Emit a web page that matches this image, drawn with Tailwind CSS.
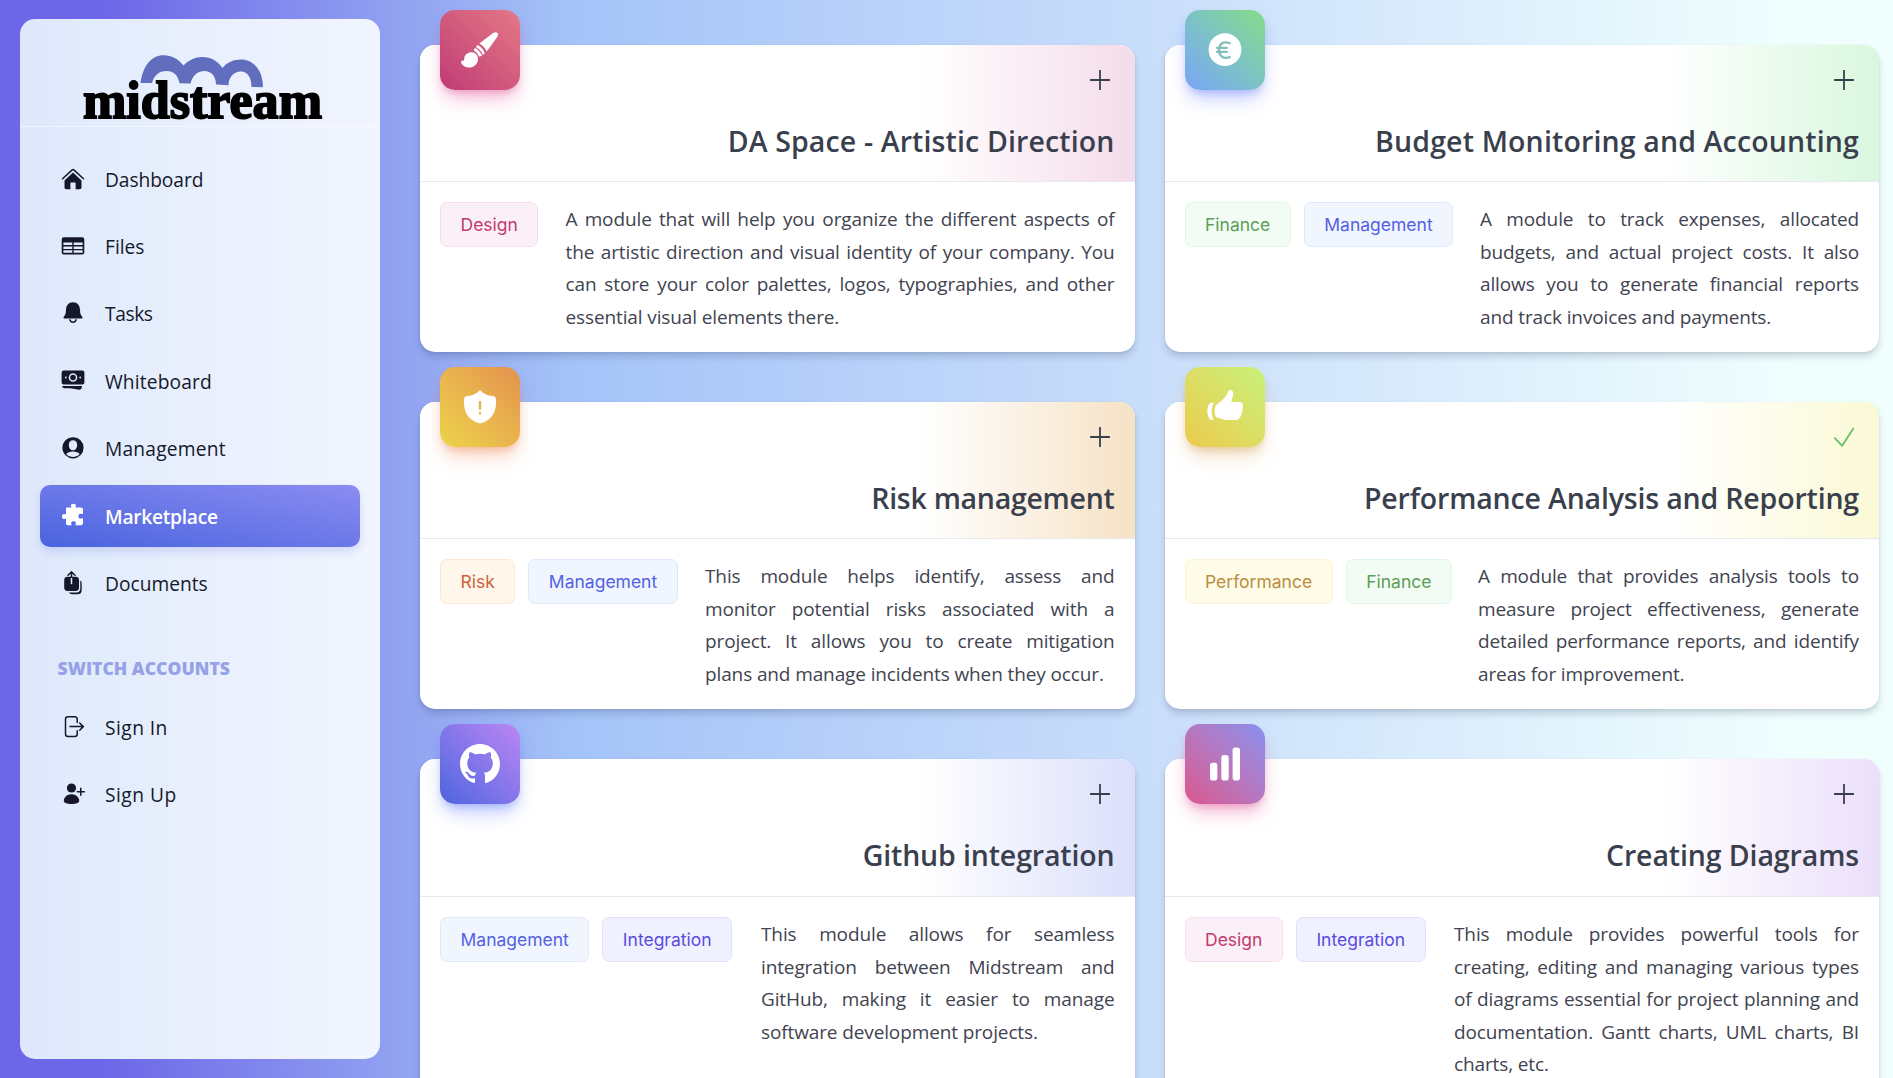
<!DOCTYPE html>
<html lang="en">
<head>
<meta charset="utf-8">
<title>Midstream - Marketplace</title>
<script src="https://cdn.jsdelivr.net/npm/@tailwindcss/browser@4"></script>
</head>
<body class="h-[1078px] overflow-hidden bg-[linear-gradient(90deg,#6c66e8_0px,#6c66e8_100px,#91a2f1_400px,#a4c3f8_570px,#c9defb_1150px,#f0fffe_1800px)] font-['Open_Sans',sans-serif]">
<div class="flex h-[1078px] overflow-hidden">

  <aside class="ml-5 mt-[19px] h-[1040px] w-[360px] shrink-0 rounded-[15px] bg-[linear-gradient(90deg,#dfe7fc_0%,#e1ecfc_20%,#e9effd_50%,#f1f5ff_100%)]">
    <div class="h-[108px] border-b border-white/50">
      <svg class="h-[107px] w-[360px] overflow-visible" viewBox="0 0 360 107">
        <path fill="#616dbd" d="M120.5 64C123 46 132 36.3 143.5 36.3C152 36.3 158 40 163.5 46.5C169 41 175 38 182.5 38C191 38 197 41.500 202.500 49C207 43.500 213 40.500 221 40.500C234 40.500 243 52 243 68.300L231.500 68C231.500 59 228 52.500 221 52.500C213 52.500 208.500 59 208.500 66.300L196 65.500C196 57 191 52 184.500 52C177 52 172.500 57 170.500 64.500L159.500 64.300C158 56 153.500 52 146.500 52C139 52 134 56.500 132 64Z"/>
        <text x="63" y="98.600" textLength="239" lengthAdjust="spacingAndGlyphs" font-family="Liberation Serif, serif" font-weight="700" font-size="53.500" fill="#000" stroke="#000" stroke-width="1.900">midstream</text>
      </svg>
    </div>
    <nav class="flex flex-col gap-[5.4px] px-5 pt-[21px] text-[19.2px] font-medium text-[#15182a]" id="nav"></nav>
    <h2 class="mt-[42px] pl-[37.5px] text-[17.5px]/6 font-extrabold tracking-[0.050px] text-[#96a1e8]">SWITCH ACCOUNTS</h2>
    <nav class="mt-[16px] flex flex-col gap-[5.4px] px-5 text-[19.2px] font-medium text-[#15182a]" id="accounts"></nav>
  </aside>

  <main class="ml-10 mt-[45px] grid h-max w-[1459px] shrink-0 grid-cols-2 gap-x-[30px] gap-y-[50px]" id="cards"></main>
</div>

<script>
const items = [
  ['Dashboard', '<path d="M1.500 11.800 11.200 2.900Q12 2.200 12.800 2.900L22.500 11.800" fill="none" stroke="currentColor" stroke-width="1.500" stroke-linecap="round"/><path d="M12 5.600 20.500 13.400V20.500Q20.500 22.200 18.800 22.200H14.600V16.300Q14.600 15.600 13.900 15.600H10.100Q9.400 15.600 9.400 16.300V22.200H5.200Q3.500 22.200 3.500 20.500V13.400Z"/>', '-tracking-[0.080px]'],
  ['Files', '<path fill-rule="evenodd" d="M2.800 3.300H21.200Q23.300 3.300 23.300 5.400V18.400Q23.300 20.500 21.200 20.500H2.800Q.7 20.500 .7 18.400V5.400Q.7 3.300 2.800 3.300ZM2.400 8.600V11H11.300V8.600ZM12.700 8.600V11H21.600V8.600ZM2.400 12.400V14.900H11.300V12.400ZM12.700 12.400V14.900H21.600V12.400ZM2.400 16.300V18.800H11.300V16.300ZM12.700 16.300V18.800H21.600V16.300Z"/>', ''],
  ['Tasks', '<path d="M12 1.300C16.500 1.300 18.800 4.600 19 8.800C19.100 12.600 19.600 14 21 15.400C22 16.500 21.600 17.400 20.400 17.400H3.600C2.400 17.400 2 16.500 3 15.400C4.400 14 4.900 12.600 5 8.800C5.200 4.600 7.500 1.300 12 1.300Z"/><path d="M8.900 18.200Q9.200 21.300 12 21.300Q14.800 21.300 15.100 18.200" fill="none" stroke="currentColor" stroke-width="1.500"/>', '-tracking-[0.400px]'],
  ['Whiteboard', '<path fill-rule="evenodd" d="M2.600 1.500H21.400Q23.400 1.500 23.400 3.500V13.500Q23.400 15.500 21.400 15.500H2.600Q.6 15.500 .6 13.500V3.500Q.6 1.500 2.600 1.500ZM12 4.200A4.300 4.300 0 1 0 12 12.800A4.300 4.300 0 1 0 12 4.200ZM12 5.700A2.800 2.800 0 1 1 12 11.300A2.800 2.800 0 1 1 12 5.700ZM4.800 7.600A.9.9 0 1 0 4.800 9.400A.9.9 0 1 0 4.800 7.600ZM19.200 7.600A.9.9 0 1 0 19.200 9.400A.9.9 0 1 0 19.200 7.600Z"/><path d="M1.200 17H21Q21 20.800 18.300 20.700L9 19.200H3Q1.200 19.100 1.200 17Z"/>', 'tracking-[0.150px]'],
  ['Management', '<path fill-rule="evenodd" d="M12 1.200A10.600 10.600 0 1 0 12 22.400A10.600 10.600 0 1 0 12 1.200ZM12 4.200C14.600 4.200 16.200 6.200 16.200 8.900C16.200 11.800 14.300 14.200 12 14.200C9.700 14.200 7.800 11.800 7.800 8.900C7.800 6.200 9.400 4.200 12 4.200ZM12 15.600C15.200 15.600 17.700 16.700 18.700 18.200C15 21.800 9 21.800 5.300 18.200C6.300 16.700 8.800 15.600 12 15.600Z"/>', 'tracking-[0.220px]'],
  ['Marketplace', '<path d="M5 5.600Q5 4.600 6 4.600H9.900C10.600 4.600 10.400 4 10 3.300C9.300 2 10.600.7 12.400.7C14.200.7 15.500 2 14.800 3.300C14.400 4 14.200 4.600 14.900 4.600H19.900Q22 4.600 22 6.600V10.300C22 11.400 21.400 11.200 20.300 10.800C18.600 10.200 17.400 11.400 17.400 13.200C17.400 15 18.600 16.200 20.300 15.600C21.400 15.200 22 15.200 22 16V20Q22 22.300 19.800 22.300H15.100C14.300 22.300 14.400 21.700 14.700 20.800C15.300 19.200 14 18.300 12.500 18.300C11 18.300 9.700 19.200 10.300 20.800C10.600 21.700 10.700 22.300 9.900 22.300H6.700Q5 22.300 5 20.600V16.200C5 15.400 4.400 15.500 3.700 15.900C2.200 16.600 1 15.300 1 13.500C1 11.700 2.200 10.400 3.700 11.100C4.400 11.500 5 11.600 5 10.800Z"/>', ''],
  ['Documents', '<path d="M6.400 5.700H14.600Q18 5.700 18 9.100V16.500Q18 19.900 14.600 19.900H6.400Q3.200 19.900 3.200 16.500V9.100Q3.200 5.700 6.400 5.700Z"/><path d="M10.500 13.200V7" fill="none" stroke="#e5edfc" stroke-width="1.500"/><path d="M10.500 6.300V1.200M7 4.300 10.500 .9 14 4.300" fill="none" stroke="currentColor" stroke-width="1.500" stroke-linecap="round"/><path d="M19.300 9.400C20.500 10 20.700 11 20.700 12.400V18.400Q20.700 23.300 16.500 23.300H11Q8.600 23.300 7.900 21.600H15.400Q19.300 21.400 19.300 17.300Z"/>', ''],
];
const accountItems = [
  ['Sign In', '<path d="M16.200 7.500V4.300Q16.200 1.800 13.700 1.800H7Q4.500 1.800 4.500 4.300V19Q4.500 21.500 7 21.500H13.700Q16.200 21.500 16.200 19V15.700M9 11.600H22M18.700 8 22.300 11.600 18.700 15.200" fill="none" stroke="currentColor" stroke-width="1.500" stroke-linecap="round" stroke-linejoin="round"/>', 'tracking-[0.450px]'],
  ['Sign Up', '<circle cx="10.500" cy="6" r="4.600"/><path d="M10.500 12.200C15.500 12.200 18.200 15.700 18.200 18.700C18.200 20.800 15 22 10.500 22C6 22 2.800 20.800 2.800 18.700C2.800 15.700 5.500 12.200 10.500 12.200Z"/><path d="M19.800 6.300V13.300M16.300 9.800H23.300" fill="none" stroke="currentColor" stroke-width="1.500" stroke-linecap="round"/>', 'tracking-[0.500px]'],
];
const active = 'bg-linear-to-tr from-[#4a63df] to-[#8b8cf1] text-white font-semibold shadow-[0_5px_8px_rgba(76,102,224,0.18)] -tracking-[0.280px]';
const row = ([t, svg, k]) => `<a class="flex h-[62px] items-center rounded-[10px] pl-[21px] pt-0.5 ${t === 'Marketplace' ? active : k}"><svg class="mr-5 size-6 shrink-0 -mt-[3px]" viewBox="0 0 24 24" fill="currentColor">${svg}</svg>${t}</a>`;
document.getElementById('nav').innerHTML = items.map(row).join('');
document.getElementById('accounts').innerHTML = accountItems.map(row).join('');

const tag = {
  Design: 'bg-[#fbf0f7] border-[#f6def0] text-[#c23a6c]',
  Finance: 'bg-[#f2fcf5] border-[#e0f7e5] text-[#5d9e54]',
  Management: 'bg-[#f0f5fe] border-[#e0e8fc] text-[#5361e3]',
  Risk: 'bg-[#fff6ec] border-[#fbe8d8] text-[#cd6238]',
  Performance: 'bg-[#fefce9] border-[#fbf3d3] text-[#bb8d42]',
  Integration: 'bg-[#f0f1fe] border-[#e0e2fb] text-[#5a4be0]',
};
const cards = [
  { title: 'DA Space - Artistic Direction', k: 'tracking-[0.130px]', head: 'h-[137px] to-[#f4dcea]', tile: 'from-[#c03a75] to-[#e37885] shadow-[0_12px_19px_-4px_rgba(230,70,150,0.35),0_5px_8px_-3px_rgba(200,60,130,0.35)]', w: 'w-[549px]', tags: ['Design'],
    icon: '<path d="M19.400 13.500 32.800 3.200C35 1.600 36.800 2.200 37.500 3C38.300 4 38.200 5.400 37 7.200L26.800 21.500C25.300 18 22.500 15 19.400 13.500Z"/><path d="M17.800 15Q22.500 17.500 24.800 23L23 24.900Q20.500 19.500 15.900 17.100Z"/><path d="M15.100 18Q19.500 20.300 22 25.600L20 26.600H18.800Q17.700 22.500 14 20.800V19.200Z"/><path d="M11 22.200C15 21.800 18.200 25 18 29C17.800 34.500 13.500 37.800 8.500 37.600C4.500 37.400 1.200 34.500 1 31.800C1 30.800 2 30.600 3 30.800C4.200 30.800 4.200 29.500 4.300 28C4.500 25 7.500 22.400 11 22.200Z"/>',
    lines: ['A module that will help you organize the different aspects of', 'the artistic direction and visual identity of your company. You', 'can store your color palettes, logos, typographies, and other', 'essential visual elements there.'] },
  { title: 'Budget Monitoring and Accounting', k: 'tracking-[0.150px]', head: 'h-[137px] to-[#d9f7de]', tile: 'from-[#7aa4f6] to-[#85dc86] shadow-[0_12px_19px_-4px_rgba(90,110,255,0.35),0_5px_8px_-3px_rgba(90,110,240,0.35)]', w: 'w-[379px]', tags: ['Finance', 'Management'],
    icon: '<circle cx="20" cy="19.700" r="16.400"/><path d="M24.800 13.200C18 10.500 14 14.500 14 20C14 25.500 18 29.600 24.800 27.200M12 17.900H21.800M12 21.900H21.800" fill="none" stroke="#80bfb9" stroke-width="2.300" stroke-linecap="round"/>',
    lines: ['A module to track expenses, allocated', 'budgets, and actual project costs. It also', 'allows you to generate financial reports', 'and track invoices and payments.'] },
  { title: 'Risk management', k: '-tracking-[0.270px]', head: 'h-[137px] to-[#f6e2c5]', tile: 'from-[#ecd44a] to-[#e4924e] shadow-[0_12px_19px_-4px_rgba(240,120,60,0.35),0_5px_8px_-3px_rgba(220,110,60,0.35)]', w: 'w-[409.500px]', tags: ['Risk', 'Management'],
    icon: '<path fill-rule="evenodd" d="M20 3C22.500 5.500 26 8.800 33 9.100Q35.400 9.100 35.800 11.300C37.200 23 33 32.500 21.800 36.100Q20 36.900 18.200 36.100C7 32.500 2.800 23 4.200 11.300Q4.600 9.100 7 9.100C14 8.800 17.500 5.500 20 3ZM18.800 14.400V22.200Q20 23.500 21.200 22.200V14.400Q20 13.300 18.800 14.400ZM20 24.900A1.250 1.250 0 1 0 20 27.400A1.250 1.250 0 1 0 20 24.900Z"/>',
    lines: ['This module helps identify, assess and', 'monitor potential risks associated with a', 'project. It allows you to create mitigation', 'plans and manage incidents when they occur.'] },
  { title: 'Performance Analysis and Reporting', k: '-tracking-[0.170px]', head: 'h-[137px] to-[#fbf9d5]', tile: 'from-[#ebca4a] to-[#c8f17b] shadow-[0_12px_19px_-4px_rgba(220,160,80,0.35),0_5px_8px_-3px_rgba(200,150,70,0.4)]', w: 'w-[381px]', tags: ['Performance', 'Finance'], done: true,
    icon: '<path d="M9 15.800C6 21 6 27.500 8.700 32.800Q5.500 33.200 4.300 31.600C1.700 27.500 1.700 20.500 4.400 16.800C5.300 15.600 7 15.500 9 15.800Z"/><path d="M13 16.500C17 13.800 21 10 22.800 5.500C23.200 4 24 3 25.500 3C27.200 3 28.500 4.500 28.300 7C28 10 26.500 12.500 26.500 13.800C26.500 14.700 27 14.900 28 14.900H34.500C37 14.900 38 16.500 37.900 19C37.700 24 36.800 28 34.500 31.300Q33.300 33 31 33H23C17 33 15 30.500 11.500 30.500C9.500 28.500 9 22 10.800 18.500C11.300 17.600 12 17.100 13 16.500Z"/>',
    lines: ['A module that provides analysis tools to', 'measure project effectiveness, generate', 'detailed performance reports, and identify', 'areas for improvement.'] },
  { title: 'Github integration', k: '-tracking-[0.140px]', head: 'h-[138px] to-[#dcdffb]', tile: 'from-[#4a65e0] to-[#bb85f3] shadow-[0_12px_19px_-4px_rgba(80,110,255,0.35),0_5px_8px_-3px_rgba(80,110,240,0.35)]', w: 'w-[353.500px]', tags: ['Management', 'Integration'],
    icon: '<path transform="scale(2.5)" d="M8 0C3.580 0 0 3.580 0 8c0 3.540 2.290 6.530 5.470 7.590.4.070.550-.170.550-.380 0-.190-.010-.820-.010-1.490-2.010.370-2.530-.490-2.690-.940-.090-.230-.480-.940-.820-1.130-.280-.150-.680-.520-.010-.530.630-.010 1.080.580 1.230.820.720 1.210 1.870.870 2.330.660.070-.520.280-.870.510-1.070-1.780-.200-3.640-.890-3.640-3.950 0-.870.310-1.590.820-2.150-.080-.200-.360-1.020.080-2.120 0 0 .670-.210 2.200.820.640-.180 1.320-.270 2-.270s1.360.090 2 .270c1.530-1.040 2.200-.820 2.200-.820.440 1.100.160 1.920.080 2.120.510.560.820 1.270.820 2.150 0 3.070-1.870 3.750-3.650 3.950.290.250.540.730.540 1.480 0 1.070-.010 1.930-.010 2.200 0 .210.150.460.550.380A8.010 8.010 0 0 0 16 8c0-4.420-3.580-8-8-8"/>',
    lines: ['This module allows for seamless', 'integration between Midstream and', 'GitHub, making it easier to manage', 'software development projects.'] },
  { title: 'Creating Diagrams', k: '-tracking-[0.110px]', head: 'h-[138px] to-[#ecdffb]', tile: 'from-[#da548e] to-[#868eef] shadow-[0_12px_19px_-4px_rgba(230,70,140,0.35),0_5px_8px_-3px_rgba(200,60,130,0.35)]', w: 'w-[405px]', tags: ['Design', 'Integration'],
    icon: '<rect x="5" y="18.700" width="7.400" height="17.800" rx="2.800"/><rect x="16.300" y="11" width="7.400" height="25.500" rx="2.800"/><rect x="27.600" y="3.400" width="7.400" height="33.100" rx="2.800"/>',
    lines: ['This module provides powerful tools for', 'creating, editing and managing various types', 'of diagrams essential for project planning and', 'documentation. Gantt charts, UML charts, BI', 'charts, etc.'] },
];
document.getElementById('cards').innerHTML = cards.map(c => `
<article class="relative rounded-[15px] bg-white shadow-[0_5px_7px_rgba(20,30,60,0.16),0_1px_3px_rgba(20,30,60,0.08)]">
  <div class="absolute -top-[35px] left-5 grid size-20 place-items-center rounded-[15px] bg-linear-to-tr ${c.tile}"><svg class="size-10 text-white" viewBox="0 0 40 40" fill="currentColor">${c.icon}</svg></div>
  <header class="flex flex-col items-end rounded-t-[15px] border-b border-[#e6e8ec] bg-linear-to-r from-white from-70% ${c.head} px-5 pt-[25px] text-[#3a3f4e]">
    <svg class="mr-[5px] mb-[31px] size-5 shrink-0" viewBox="0 0 20 20" fill="none" stroke="${c.done ? '#66c266' : 'currentColor'}" stroke-width="1.800" stroke-linecap="round" stroke-linejoin="round">${c.done ? '<path d="M.8 11.200 8.200 18.800 19.300 1.500"/>' : '<path d="M10 .5V19.500M.5 10H19.500"/>'}</svg>
    <h3 class="whitespace-nowrap text-[28.500px]/10 font-semibold ${c.k}">${c.title}</h3>
  </header>
  <div class="flex items-start justify-between p-5">
    <div class="flex gap-[13px]">${c.tags.map(t => `<span class="flex h-[45px] items-center rounded-[7px] border px-[19.500px] pt-0.5 font-['Inter',sans-serif] text-[17.500px] ${tag[t]}">${t}</span>`).join('')}</div>
    <div class="${c.w} -mb-px whitespace-nowrap pt-px text-[19px]/[32.500px] -tracking-[0.120px] text-[#414350]">${c.lines.map((l, i) => `<p class="${i < c.lines.length - 1 ? 'text-justify [text-align-last:justify]' : ''}">${l}</p>`).join('')}</div>
  </div>
</article>`).join('');
</script>
</body>
</html>
